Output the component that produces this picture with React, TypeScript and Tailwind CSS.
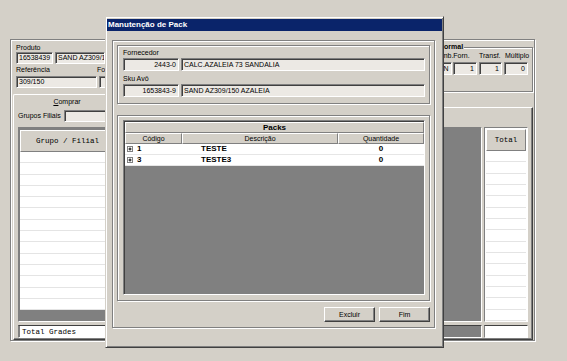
import React from "react";

const etched = "border border-[#808080] shadow-[inset_1px_1px_0_#fff,1px_1px_0_#fff]";
const sunken =
  "border border-t-[#808080] border-l-[#808080] border-r-white border-b-white shadow-[inset_1px_1px_0_#404040] bg-[#ece9e4]";
const raised =
  "border border-t-white border-l-white border-r-[#404040] border-b-[#404040] shadow-[inset_-1px_-1px_0_#808080] bg-[#d4d0c8]";
const cell = "border border-t-white border-l-white border-r-[#808080] border-b-[#808080] bg-[#d4d0c8]";

function Field({ className, right, children }: { className: string; right?: boolean; children?: React.ReactNode }) {
  return (
    <div
      className={`${sunken} ${className} flex items-center overflow-hidden whitespace-nowrap ${
        right ? "justify-end pr-[2px]" : "pl-[2px]"
      }`}
    >
      {children}
    </div>
  );
}

function PlusBox() {
  return (
    <svg width="6" height="6" viewBox="0 0 6 6" className="shrink-0">
      <rect x="0.5" y="0.5" width="5" height="5" fill="#fff" stroke="#808080" />
      <path d="M1.5 3h3M3 1.5v3" stroke="#000" strokeWidth="1" />
    </svg>
  );
}

const PACKS = [
  { codigo: "1", descricao: "TESTE", qtd: "0" },
  { codigo: "3", descricao: "TESTE3", qtd: "0" },
];

export default function App() {
  return (
    <div className="relative w-[567px] h-[361px] overflow-hidden bg-[#d4d0c8] pl-[10px] pt-[39px] text-[7px] leading-[8px] text-black font-['Liberation_Sans',Arial,sans-serif]">
      {/* Background form */}
      <div className={`w-[525px] h-[302px] flex flex-col ${etched}`}>
        {/* Header fields */}
        <div className="flex h-[54px] shrink-0">
          <div className="flex-1 pl-[5px] pt-[4px]">
            <div>Produto</div>
            <div className="flex gap-[2px]">
              <Field className="w-[37px] h-[12px]">16538439</Field>
              <Field className="w-[50px] h-[12px]">SAND AZ309/150</Field>
            </div>
            <div className="flex mt-[2px]">
              <div className="w-[81px]">
                <div>Referência</div>
                <Field className="mt-[2px] w-[81px] h-[12px]">309/150</Field>
              </div>
              <div>
                <div className="w-[8px] overflow-hidden whitespace-nowrap">Fornecedor</div>
                <Field className="mt-[2px] ml-[2px] w-[200px] h-[12px]" />
              </div>
            </div>
          </div>
          {/* Normal group */}
          <div className={`relative mt-[7px] mr-[1px] w-[100px] h-[45px] ${etched}`}>
            <span className="absolute -top-[5px] left-[4px] bg-[#d4d0c8] px-[1px] font-bold">Normal</span>
            <div className="flex mt-[4px] ml-[3px] whitespace-nowrap">
              <span className="w-[42px]">Emb.Forn.</span>
              <span className="w-[26px]">Transf.</span>
              <span>Múltiplo</span>
            </div>
            <div className="flex mt-[2px] ml-[6px]">
              <Field className="w-[12px] h-[13px] !justify-center !pl-0">N</Field>
              <Field right className="ml-[1px] w-[24px] h-[13px]">1</Field>
              <Field right className="ml-[2px] w-[23px] h-[13px]">1</Field>
              <Field right className="ml-[2px] w-[24px] h-[13px]">0</Field>
            </div>
          </div>
        </div>

        {/* Tab control */}
        <div className="ml-[2px] w-[520px] flex flex-col">
          <div className="relative -mb-px w-[108px] h-[14px] bg-[#d4d0c8] border border-b-0 border-t-white border-l-white border-r-[#404040] rounded-t-[2px] flex items-center justify-center">
            <span>
              <span className="underline">C</span>omprar
            </span>
          </div>
          <div className={`h-[233px] ${raised} pl-[4px] pt-[2px]`}>
            <div className="flex items-center">
              <span className="w-[46px]">Grupos Filiais</span>
              <Field className="w-[200px] h-[12px]" />
            </div>
            <div className="flex gap-[2px] mt-[5px] h-[211px]">
              {/* Main grid */}
              <div className="w-[464px] flex flex-col">
                <div className="h-[195px] border border-t-[#808080] border-l-[#808080] border-r-white border-b-white bg-[#808080] pt-[2px] pl-[1px]">
                  <div className="w-[95px] flex flex-col">
                    <div className={`h-[22px] ${cell} flex items-center justify-center font-['Liberation_Mono',monospace] text-[7.5px]`}>
                      Grupo / Filial
                    </div>
                    {Array.from({ length: 14 }).map((_, i) => (
                      <div key={i} className="h-[11.3px] bg-white border-b border-[#e4e4e4]" />
                    ))}
                  </div>
                </div>
                <div className="mt-[3px] h-[13px] border border-t-[#404040] border-l-[#808080] border-r-white border-b-white bg-[#808080] pl-[1px]">
                  <div className="w-[95px] h-full bg-white flex items-center pl-[2px] font-['Liberation_Mono',monospace] text-[7.5px]">
                    Total Grades
                  </div>
                </div>
              </div>
              {/* Total grid */}
              <div className="w-[44px] flex flex-col">
                <div className="h-[195px] border border-t-[#808080] border-l-[#808080] border-r-white border-b-white bg-white flex flex-col pt-[1px] px-[1px]">
                  <div className={`h-[22px] shrink-0 ${cell} flex items-center justify-center font-['Liberation_Mono',monospace] text-[7.5px]`}>
                    Total
                  </div>
                  {Array.from({ length: 15 }).map((_, i) => (
                    <div key={i} className="flex-1 bg-white border-b border-[#e4e4e4]" />
                  ))}
                </div>
                <div className="mt-[3px] h-[13px] border border-t-[#404040] border-l-[#808080] border-r-white border-b-white bg-white" />
              </div>
            </div>
          </div>
        </div>
      </div>

      {/* Dialog: Manutenção de Pack */}
      <div className="absolute z-20 left-[105px] top-[16px] w-[339px] h-[332px] bg-[#d4d0c8] border border-t-[#d4d0c8] border-l-[#d4d0c8] border-r-[#404040] border-b-[#404040] shadow-[inset_1px_1px_0_#fff,inset_-1px_-1px_0_#808080] px-[1px] pt-[2px]">
        <div className="h-[12px] bg-[#0a246a] text-white font-bold text-[8px] leading-[12px] pl-[1px]">
          Manutenção de Pack
        </div>
        <div className={`ml-[5px] mt-[9px] w-[323px] h-[288px] ${etched} px-[4px] pt-[4px] flex flex-col`}>
          {/* Fornecedor / Sku */}
          <div className={`h-[59px] ${etched} pl-[5px] pr-[4px] pt-[3px]`}>
            <div>Fornecedor</div>
            <div className="flex gap-[2px] mt-[1px]">
              <Field right className="w-[56px] h-[13px]">2443-0</Field>
              <Field className="flex-1 h-[13px]">CALC.AZALEIA 73 SANDALIA</Field>
            </div>
            <div className="mt-[4px]">Sku Avô</div>
            <div className="flex gap-[2px] mt-[1px]">
              <Field right className="w-[56px] h-[13px]">1653843-9</Field>
              <Field className="flex-1 h-[13px]">SAND AZ309/150 AZALEIA</Field>
            </div>
          </div>

          {/* Packs */}
          <div className={`mt-[11px] h-[186px] ${etched} pl-[5px] pt-[4px]`}>
            <div className="w-[302px] h-[175px] border border-t-[#808080] border-l-[#808080] border-r-white border-b-white shadow-[inset_1px_1px_0_#404040] bg-[#808080] pt-[1px] pl-[1px] flex flex-col">
              <div className={`h-[11px] ${cell} flex items-center justify-center font-bold text-[8px]`}>Packs</div>
              <div className="flex h-[11px]">
                <div className={`w-[57px] ${cell} flex items-center justify-center`}>Código</div>
                <div className={`w-[156px] ${cell} flex items-center justify-center`}>Descrição</div>
                <div className={`flex-1 ${cell} flex items-center justify-center`}>Quantidade</div>
              </div>
              {PACKS.map((p) => (
                <div key={p.codigo} className="flex h-[11px] bg-white border-b border-[#e6e6e6] font-bold text-[8px] leading-[10px]">
                  <div className="w-[57px] flex items-center pl-[2px] gap-[4px]">
                    <PlusBox />
                    <span>{p.codigo}</span>
                  </div>
                  <div className="w-[156px] flex items-center pl-[19px]">{p.descricao}</div>
                  <div className="flex-1 flex items-center justify-center">{p.qtd}</div>
                </div>
              ))}
            </div>
          </div>

          {/* Buttons */}
          <div className="mt-[6px] flex justify-end gap-[4px]">
            <button className={`w-[51px] h-[15px] ${raised} flex items-center justify-center`}>Excluir</button>
            <button className={`w-[51px] h-[15px] ${raised} flex items-center justify-center`}>Fim</button>
          </div>
        </div>
      </div>
    </div>
  );
}
